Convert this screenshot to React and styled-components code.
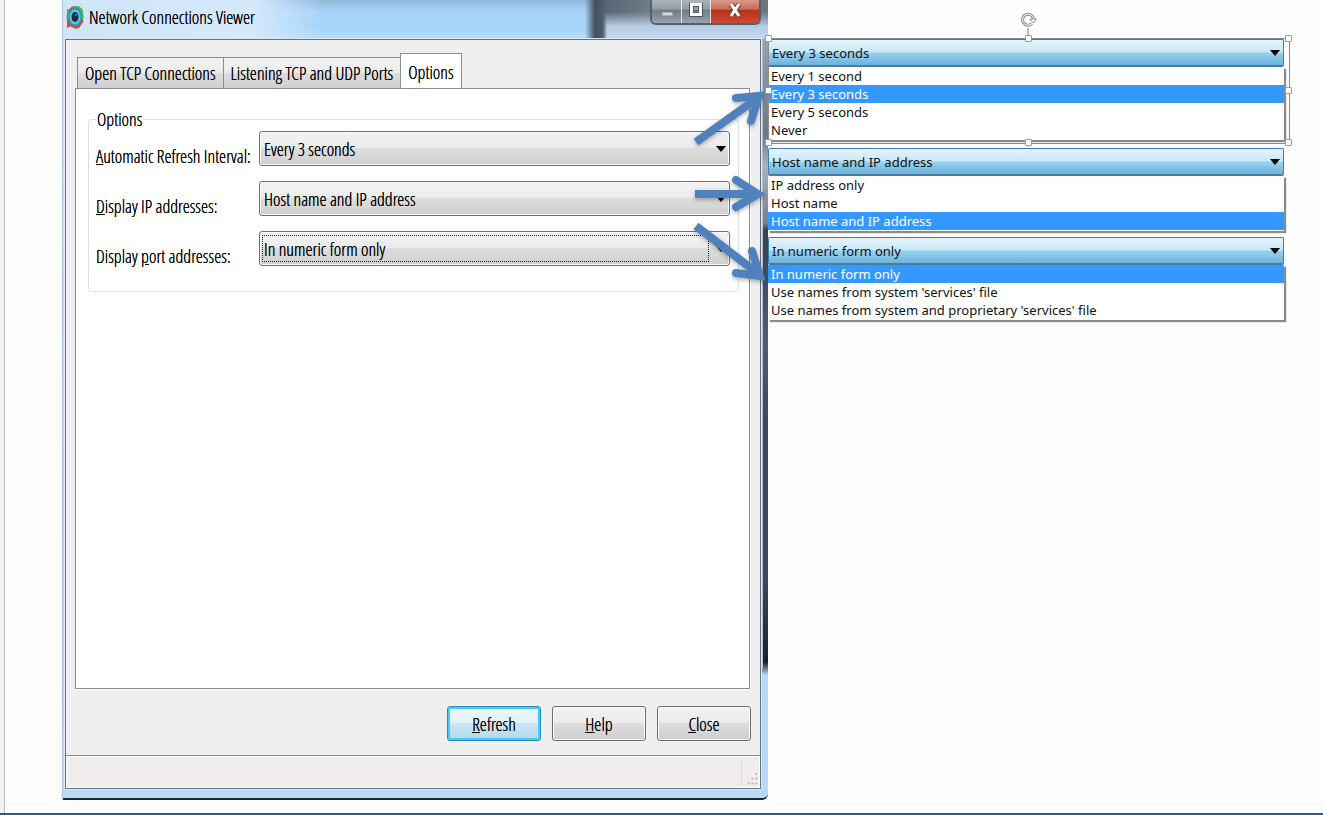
import React, { useState } from "react";
import styled, { createGlobalStyle, css } from "styled-components";

const GlobalStyle = createGlobalStyle`
  * {
    box-sizing: border-box;
  }
  body {
    margin: 0;
    background: #fdfdfd;
    color: #111;
    font-family: "Noto Sans", "Open Sans", sans-serif;
    font-size: 13px;
  }
`;

const Page = styled.div`
  min-height: 100vh;
  display: flex;
  border-bottom: 2px solid #2f5597;
`;

const Gutter = styled.div`
  width: 5px;
  flex: none;
  background: #f1f1f1;
  border-right: 1px solid #bdbdbd;
`;

const Sheet = styled.main`
  flex: 1;
  display: grid;
  grid-template-columns: minmax(0, 706fr) minmax(0, 521fr);
  padding: 0 34px 13px 57px;
`;

const Window = styled.section`
  display: flex;
  flex-direction: column;
  padding: 0 7px 9px 2px;
  border-left: 1px solid #a9c6de;
  border-bottom: 2px solid #1d2a33;
  border-radius: 0 0 6px 2px;
  color: #000;
  font-family: "Open Sans Condensed Light", "Roboto Condensed", "Open Sans", sans-serif;
  font-size: 18px;
  text-shadow: 0 0 0 #000;
  background:
    linear-gradient(90deg, #5a6b7c 0 1px, #b4bfca 1px 2px, transparent 2px) right 39px / 7px 630px no-repeat,
    linear-gradient(#9aa3ac, #6b7784 15%, #a9b3bd 20%, #76808a 29%, #39424d 30%, #4d5f70 48%, #41465c 60%, #41465c 85%, #1c2126 98%, #b9d6f0) right 39px / 7px 636px no-repeat,
    linear-gradient(#cfe6fb, #b4d7f5 60%, #b8d8f4);
`;

const TitleBar = styled.header`
  height: 39px;
  flex: none;
  display: flex;
  align-items: flex-start;
  gap: 5px;
  margin: 0 -7px 0 -2px;
  padding: 0 7px 0 3px;
  background:
    linear-gradient(90deg, transparent 522px, #43505f 532px, #4f5f70 540px, transparent 544px),
    linear-gradient(transparent 12px, #b4cbe2 26px, #c0d9f0) 538px 0 / 100% 39px no-repeat,
    linear-gradient(90deg, transparent 535px, #586573 541px, #78838f 600px, #6b7580),
    linear-gradient(90deg, #cfe4f7, #d4e9fb 190px, transparent 260px),
    linear-gradient(#8fb9da, #a8d3f8 30%, #a5d3fb 70%, #b9dbf8);
`;

const AppIcon = styled.svg`
  width: 18px;
  height: 26px;
  margin-top: 4px;
`;

const Title = styled.h1`
  flex: 1;
  margin: 0;
  font-size: inherit;
  font-weight: inherit;
  line-height: 34px;
`;

const Controls = styled.div`
  display: flex;
  height: 25px;
  border: 2px solid #55606b;
  border-top: 0;
  border-radius: 0 0 6px 6px;
  overflow: hidden;
`;

const Control = styled.button`
  width: ${(props) => (props.$close ? "49px" : "29px")};
  display: flex;
  justify-content: center;
  padding: 3px 0 0;
  border: 0;
  border-left: ${(props) => (props.$first ? "0" : "1px solid #dfe4e8")};
  background: ${(props) =>
    props.$close
      ? "linear-gradient(#d99a8c, #c96a56 40%, #b5301a 45%, #cf4a30)"
      : "linear-gradient(#aab4bd, #939ca5 40%, #727b84 45%, #9aa4ae)"};
`;

const Client = styled.div`
  flex: 1;
  display: flex;
  flex-direction: column;
  border: 1px solid #5f7184;
  outline: 1px solid #dcebf7;
  background: #efefef;
`;

const TabList = styled.div`
  display: flex;
  align-items: flex-end;
  height: 35px;
  margin: 13px 9px 0 12px;
`;

const Tab = styled.button`
  height: ${(props) => (props.$active ? "36px" : "31px")};
  padding: 0 7px;
  border: 1px solid #898c95;
  border-bottom: 0;
  margin-left: -1px;
  margin-bottom: ${(props) => (props.$active ? "-1px" : "0")};
  font: inherit;
  color: inherit;
  text-shadow: inherit;
  white-space: nowrap;
  background: ${(props) =>
    props.$active ? "#fff" : "linear-gradient(#f3f3f3, #ebebeb 48%, #dddddd 52%, #d0d0d0)"};
`;

const TabPanel = styled.div`
  flex: 1;
  margin: 0 10px 0 9px;
  padding: 21px 10px 0 12px;
  border: 1px solid #898c95;
  box-shadow: 1px 1px 0 #fff;
  background: #fff;
`;

const Group = styled.fieldset`
  margin: 0;
  min-width: 0;
  padding: 3px 8px 25px 7px;
  border: 1px solid #d5dfe5;
  border-radius: 4px;
`;

const GroupTitle = styled.legend`
  padding: 0 1px;
  line-height: 18px;
  height: 18px;
`;

const Field = styled.div`
  display: grid;
  grid-template-columns: 163px minmax(0, 1fr);
  height: 35px;

  & + & {
    margin-top: 15px;
  }
`;

const FieldLabel = styled.label`
  padding-top: 15px;
  line-height: 20px;
  white-space: nowrap;
`;

const arrow = css`
  &::after {
    content: "";
    position: absolute;
    right: 4px;
    top: 50%;
    margin-top: -3px;
    border: 5px solid transparent;
    border-top: 6px solid #000;
    border-bottom: 0;
    pointer-events: none;
  }
`;

const Combo = styled.div`
  position: relative;
  ${arrow}

  ${(props) =>
    props.$focused &&
    css`
      &::before {
        content: "";
        position: absolute;
        inset: 4px 21px 4px 3px;
        border: 1px dotted #222;
        pointer-events: none;
      }
    `}
`;

const ComboSelect = styled.select`
  appearance: none;
  width: 100%;
  height: 35px;
  padding: 0 24px 0 4px;
  border: 1px solid #707070;
  border-radius: 3px;
  outline: 0;
  box-shadow: inset 0 0 0 1px #fafafa;
  font: inherit;
  color: inherit;
  text-shadow: inherit;
  background: linear-gradient(#f2f2f2, #ebebeb 48%, #dddddd 50%, #cfcfcf);
`;

const Actions = styled.div`
  display: flex;
  justify-content: flex-end;
  gap: 11px;
  padding: 17px 9px 14px;
`;

const Action = styled.button`
  width: 94px;
  height: 35px;
  border: 1px solid #707070;
  border-radius: 3px;
  font: inherit;
  color: inherit;
  text-shadow: inherit;
  box-shadow: inset 0 0 0 1px #fafafa;
  background: linear-gradient(#f2f2f2, #ebebeb 48%, #dddddd 50%, #cfcfcf);

  ${(props) =>
    props.$primary &&
    css`
      border-color: #2c8bb8;
      box-shadow: inset 0 0 0 2px #45ccf3;
      background: linear-gradient(#eef6fa, #e2f1f9 48%, #cae5f3 50%, #b5d9ec);
    `}
`;

const StatusBar = styled.footer`
  height: 33px;
  display: flex;
  justify-content: flex-end;
  align-items: flex-end;
  border-top: 1px solid #8a8a8a;
  box-shadow: inset 0 0 0 1px #fff;
  background: #f0edec;
`;

const Grip = styled.svg`
  width: 19px;
  height: 28px;
  margin-bottom: 2px;
  border-left: 1px solid #dcdad9;
`;

const Callouts = styled.aside`
  position: relative;
  padding: 39px 5px 0 0;
`;

const Callout = styled.div`
  position: relative;
  margin-bottom: ${(props) => (props.$selected ? "8px" : "6px")};
`;

const OpenCombo = styled.div`
  position: relative;
  height: 28px;
  ${arrow}
`;

const OpenSelect = styled.select`
  appearance: none;
  width: 100%;
  height: 100%;
  padding: 0 24px 0 3px;
  border: 1px solid #3c7fb1;
  border-bottom: 2px solid #4a7ba0;
  border-radius: 2px;
  outline: 0;
  font: inherit;
  color: inherit;
  background: linear-gradient(#e4f3fb, #c9e8f7 48%, #98d1ef 52%, #6cb3dc);
`;

const List = styled.ul`
  list-style: none;
  margin: 0;
  padding: 0 0 1px;
  background: #fff;
  box-shadow: 2px 2px 1px #8a8a8a;
  clip-path: inset(0 -5px -5px 0);
`;

const Item = styled.li`
  height: 18px;
  line-height: 18px;
  padding-left: 3px;
  white-space: nowrap;
  color: ${(props) => (props.$active ? "#fff" : "#111")};
  background: ${(props) => (props.$active ? "#3399ff" : "transparent")};
`;

const Selection = styled.div`
  position: absolute;
  inset: -1px -6px -4px 0;
  border: 1px solid #8c8c8c;
  pointer-events: none;
`;

const Handle = styled.span`
  position: absolute;
  left: ${(props) => props.$x};
  top: ${(props) => props.$y};
  width: 7px;
  height: 7px;
  margin: -4px;
  border: 1px solid #9a9a9a;
  border-radius: 1px;
  background: #fff;
`;

const Rotate = styled.svg`
  position: absolute;
  left: 50%;
  bottom: 100%;
  width: 18px;
  height: 28px;
  margin-left: -10px;
`;

const Arrows = styled.svg`
  position: absolute;
  left: -83px;
  top: 80px;
  width: 90px;
  height: 210px;
  pointer-events: none;
  filter: drop-shadow(0 2px 2px rgba(0, 0, 0, 0.3));
`;

const refreshOptions = ["Every 1 second", "Every 3 seconds", "Every 5 seconds", "Never"];
const ipOptions = ["IP address only", "Host name", "Host name and IP address"];
const portOptions = [
  "In numeric form only",
  "Use names from system 'services' file",
  "Use names from system and proprietary 'services' file",
];

const handles = [
  ["0%", "0%"],
  ["50%", "0%"],
  ["100%", "0%"],
  ["0%", "50%"],
  ["100%", "50%"],
  ["0%", "100%"],
  ["50%", "100%"],
  ["100%", "100%"],
];

const Setting = ({ id, label, options, value, onChange, focused }) => (
  <Field>
    <FieldLabel htmlFor={id}>{label}</FieldLabel>
    <Combo $focused={focused}>
      <ComboSelect id={id} value={value} onChange={(e) => onChange(e.target.value)}>
        {options.map((option) => (
          <option key={option}>{option}</option>
        ))}
      </ComboSelect>
    </Combo>
  </Field>
);

const Expanded = ({ name, options, value, onChange, selected }) => (
  <Callout $selected={selected}>
    <OpenCombo>
      <OpenSelect aria-label={name} value={value} onChange={(e) => onChange(e.target.value)}>
        {options.map((option) => (
          <option key={option}>{option}</option>
        ))}
      </OpenSelect>
    </OpenCombo>
    <List role="listbox" aria-label={name}>
      {options.map((option) => (
        <Item
          key={option}
          role="option"
          aria-selected={option === value}
          $active={option === value}
          onClick={() => onChange(option)}
        >
          {option}
        </Item>
      ))}
    </List>
    {selected && (
      <Selection>
        <Rotate viewBox="0 0 18 28" fill="none">
          <path d="M9 17v11" stroke="#777" />
          <path d="M13 12.5A5.5 5.5 0 1 1 14.5 8" stroke="#8c8c8c" strokeWidth="3" />
          <path d="M13 12.5A5.5 5.5 0 1 1 14.5 8" stroke="#fff" />
          <path d="M11 8h6.500l-3.300 4z" fill="#fff" stroke="#8c8c8c" />
        </Rotate>
        {handles.map(([x, y]) => (
          <Handle key={x + y} $x={x} $y={y} />
        ))}
      </Selection>
    )}
  </Callout>
);

const App = () => {
  const [tab, setTab] = useState("Options");
  const [refresh, setRefresh] = useState("Every 3 seconds");
  const [ip, setIp] = useState("Host name and IP address");
  const [port, setPort] = useState("In numeric form only");

  return (
    <Page>
      <GlobalStyle />
      <Gutter />
      <Sheet>
        <Window>
          <TitleBar>
            <AppIcon viewBox="0 0 18 26" aria-hidden="true">
              <ellipse cx="9" cy="13" rx="8.500" ry="11" fill="#d9482a" />
              <path d="M1 15V5l4 1q5-6 9-3l3 3v9z" fill="#4db83a" />
              <path d="M1 15v9l4-2q4 4 8 2l4-6v-3z" fill="#d9482a" />
              <ellipse cx="9" cy="13" rx="7" ry="9.500" fill="#2494c8" />
              <ellipse cx="9" cy="13" rx="5.500" ry="7.500" fill="#5cc4ea" />
              <ellipse cx="9" cy="13" rx="3.500" ry="5" fill="#14303c" />
              <circle cx="10" cy="11" r="1" fill="#6c8c9a" />
            </AppIcon>
            <Title>Network Connections Viewer</Title>
            <Controls>
              <Control $first aria-label="Minimize">
                <svg width="14" height="16">
                  <rect x="2" y="9" width="11" height="4" fill="#d5dade" stroke="#7c858d" />
                </svg>
              </Control>
              <Control aria-label="Maximize">
                <svg width="14" height="16" fill="none">
                  <rect x="2.500" y="1.500" width="9" height="10" stroke="#4b545c" strokeWidth="5" />
                  <rect x="2.500" y="1.500" width="9" height="10" stroke="#fff" strokeWidth="3" />
                </svg>
              </Control>
              <Control $close aria-label="Close window">
                <svg width="14" height="16" fill="none">
                  <path d="M3 1l8 12M11 1L3 13" stroke="#6d4040" strokeWidth="5" />
                  <path d="M3 1l8 12M11 1L3 13" stroke="#fff" strokeWidth="3" />
                </svg>
              </Control>
            </Controls>
          </TitleBar>
          <Client>
            <TabList role="tablist">
              {["Open TCP Connections", "Listening TCP and UDP Ports", "Options"].map((name) => (
                <Tab
                  key={name}
                  role="tab"
                  aria-selected={tab === name}
                  $active={tab === name}
                  onClick={() => setTab(name)}
                >
                  {name}
                </Tab>
              ))}
            </TabList>
            <TabPanel role="tabpanel">
              {tab === "Options" && (
                <Group>
                  <GroupTitle>Options</GroupTitle>
                  <Setting
                    id="refresh"
                    label={<><u>A</u>utomatic Refresh Interval:</>}
                    options={refreshOptions}
                    value={refresh}
                    onChange={setRefresh}
                  />
                  <Setting
                    id="ip"
                    label={<><u>D</u>isplay IP addresses:</>}
                    options={ipOptions}
                    value={ip}
                    onChange={setIp}
                  />
                  <Setting
                    id="port"
                    label={<>Display <u>p</u>ort addresses:</>}
                    options={portOptions}
                    value={port}
                    onChange={setPort}
                    focused
                  />
                </Group>
              )}
            </TabPanel>
            <Actions>
              <Action $primary><u>R</u>efresh</Action>
              <Action><u>H</u>elp</Action>
              <Action><u>C</u>lose</Action>
            </Actions>
            <StatusBar>
              <Grip viewBox="0 0 19 28" fill="#b9b5b4" aria-hidden="true">
                <path d="M14 15h2v2h-2zM14 20h2v2h-2zM10 20h2v2h-2zM14 25h2v2h-2zM10 25h2v2h-2zM6 25h2v2H6z" />
              </Grip>
            </StatusBar>
          </Client>
        </Window>
        <Callouts>
          <Expanded
            name="Automatic refresh interval choices"
            options={refreshOptions}
            value={refresh}
            onChange={setRefresh}
            selected
          />
          <Expanded name="IP address choices" options={ipOptions} value={ip} onChange={setIp} />
          <Expanded name="Port address choices" options={portOptions} value={port} onChange={setPort} />
          <Arrows viewBox="0 0 90 210" fill="none" stroke="#4f81bd" strokeWidth="8" aria-hidden="true">
            <path d="M11 62L71 19" />
            <path d="M51 18L74 16L66 41" strokeLinecap="round" />
            <path d="M10 114H70" />
            <path d="M51 100L73 114L51 127" strokeLinecap="round" />
            <path d="M11 146L71 192" />
            <path d="M67 171L75 196L51 193" strokeLinecap="round" />
          </Arrows>
        </Callouts>
      </Sheet>
    </Page>
  );
};

export default App;
